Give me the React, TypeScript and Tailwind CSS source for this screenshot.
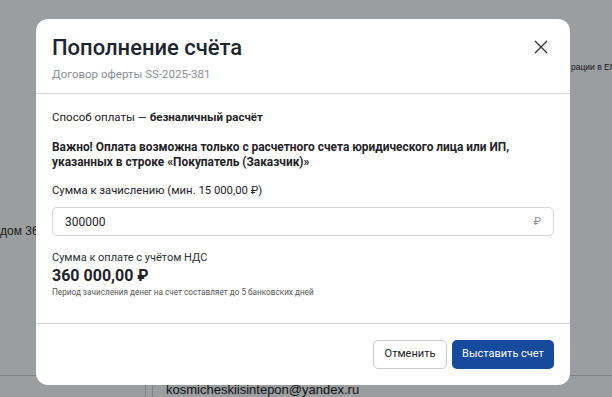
import React from "react";

export default function App() {
  return (
    <div className="relative w-[612px] h-[397px] overflow-hidden bg-[#9a9ea1] font-['Roboto',sans-serif] text-[#1f2328]">
      {/* page behind the overlay */}
      <div className="absolute left-[571px] top-[61px] text-[8.5px] text-[#1a1a1a] font-['Liberation_Sans',sans-serif] whitespace-nowrap">рации в ЕР</div>
      <div className="absolute left-0 top-[222px] text-[12px] text-[#1a1a1a] font-['Liberation_Sans',sans-serif] whitespace-nowrap">дом 36</div>
      <div className="absolute left-0 right-0 top-[375px] h-px bg-[#7f8386]"></div>
      <div className="absolute left-[145px] top-[385px] w-px h-[20px] bg-[#7f8386]"></div>
      <div className="absolute left-[152px] top-[385px] w-px h-[20px] bg-[#7f8386]"></div>
      <div className="absolute left-[166px] top-[380px] text-[13px] text-[#111] font-['Liberation_Sans',sans-serif] whitespace-nowrap">kosmicheskiisintepon@yandex.ru</div>

      {/* modal */}
      <div className="absolute left-[36px] top-[19px] w-[534px] h-[366px] bg-white rounded-[12px] flex flex-col">
        <div className="flex items-start justify-between px-4 pt-[14px] h-[75px] border-b border-[#d4d6d8]">
          <div>
            <h2 className="text-[22px] leading-[30px] font-medium text-[#1b2530]">Пополнение счёта</h2>
            <p className="text-[11.5px] leading-[16px] text-[#8a8f94] mt-[3px]">Договор оферты SS-2025-381</p>
          </div>
          <button className="mt-[7px] mr-[6px] w-[14px] h-[14px] text-[#333]">
            <svg viewBox="0 0 14 14" className="w-[14px] h-[14px]" fill="none" stroke="currentColor" strokeWidth="1.3">
              <path d="M1 1L13 13M13 1L1 13" />
            </svg>
          </button>
        </div>

        <div className="flex-1 px-4 pt-[15px] text-[11.5px] leading-[16px] border-b border-[#d4d6d8]">
          <p>
            Способ оплаты — <span className="font-bold">безналичный расчёт</span>
          </p>
          <p className="font-bold text-[11.9px] mt-[15px] leading-[15px]">
            Важно! Оплата возможна только с расчетного счета юридического лица или ИП,
            <br />
            указанных в строке «Покупатель (Заказчик)»
          </p>
          <p className="mt-[13px] text-[11.3px]">Сумма к зачислению (мин. 15 000,00 ₽)</p>
          <div className="mt-[8px] h-[29px] border border-[#d4d6d8] rounded-[5px] flex items-center justify-between px-[12px]">
            <span className="text-[12px]">300000</span>
            <span className="text-[11px] text-[#8a8f94]">₽</span>
          </div>
          <p className="mt-[14px] text-[11px] leading-[16px] text-[#2b3138]">Сумма к оплате с учётом НДС</p>
          <p className="text-[16px] leading-[19px] font-bold">360 000,00 ₽</p>
          <p className="text-[8.2px] leading-[12px] text-[#555] mt-[1px]">Период зачисления денег на счет составляет до 5 банковских дней</p>
        </div>

        <div className="h-[61px] flex items-center justify-end gap-[5px] px-4 pb-[1px]">
          <button className="h-[29px] w-[74px] border border-[#c9ccd0] rounded-[5px] text-[11px] text-[#222]">Отменить</button>
          <button className="h-[29px] w-[102px] bg-[#154a9c] rounded-[5px] text-[11px] text-white">Выставить счет</button>
        </div>
      </div>
    </div>
  );
}
